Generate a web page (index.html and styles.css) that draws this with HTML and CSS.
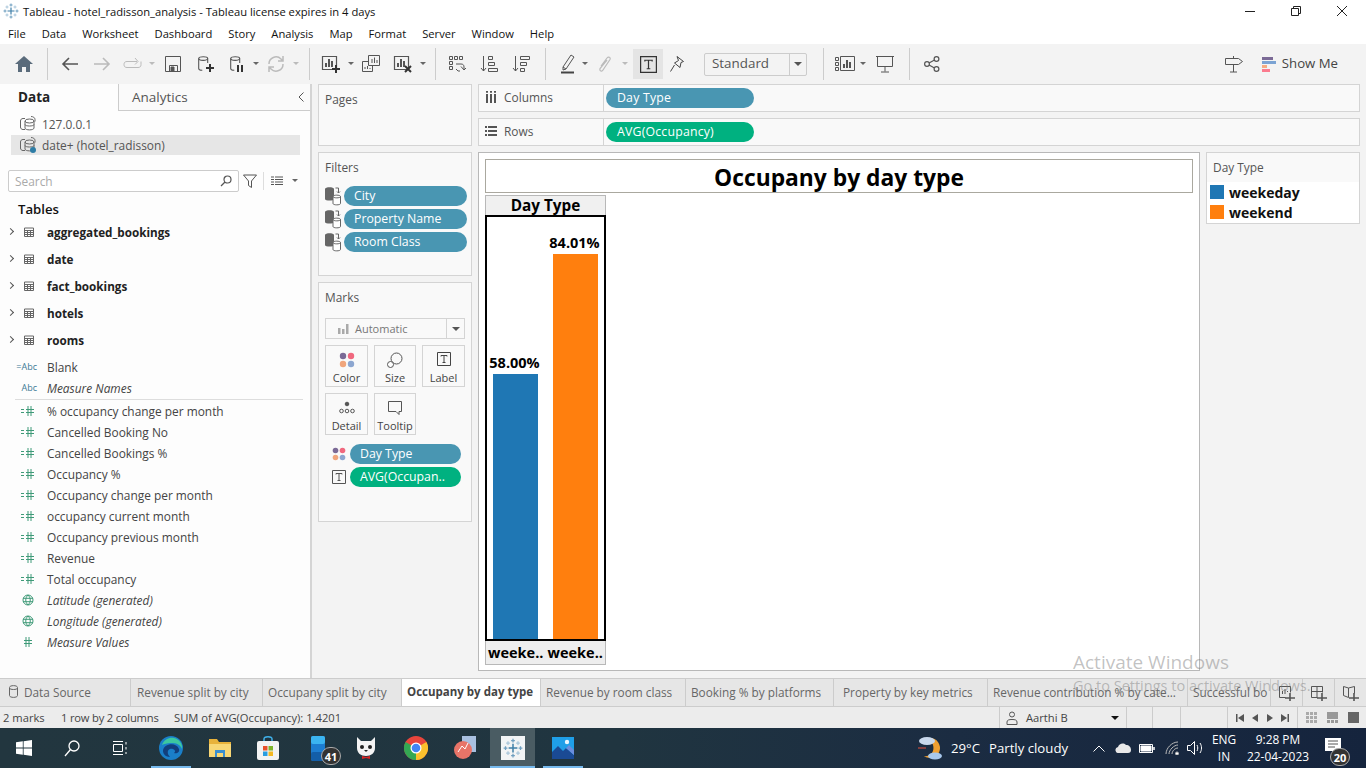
FILE: index.html
```html
<!DOCTYPE html>
<html lang="en">
<head>
  <meta charset="UTF-8" />
  <title>Tableau - hotel_radisson_analysis</title>
  <link rel="stylesheet" href="styles.css">
</head>
<body>
  <svg class="defs" width="0" height="0">
    <symbol id="logo" viewBox="0 0 16 16">
      <path d="M8 4.500v7M4.500 8h7" stroke="#3f7fa8" stroke-width="1.200"/>
      <path d="M8 .5v3M6.500 2h3M8 12.500v3M6.500 14h3M.5 8h3M2 6.500v3M12.500 8h3M14 6.500v3" stroke="#6f9fc0"/>
      <path d="M4 2.500v3M2.500 4h3M12 2.500v3M10.500 4h3M4 10.500v3M2.500 12h3M12 10.500v3M10.500 12h3" stroke="#a9c6da"/>
    </symbol>
    <symbol id="cyl" viewBox="0 0 20 20" fill="none" stroke="currentColor" stroke-width="1.2">
      <ellipse cx="8" cy="4" rx="5" ry="2"/>
      <path d="M3 4v11c0 1.2 2 2 4 2M13 4v5"/>
    </symbol>
    <symbol id="sheet" viewBox="0 0 20 20" fill="none" stroke="currentColor" stroke-width="1.2">
      <path d="M1.500 2.500h14v13h-14z"/>
      <path d="M5 13V9M8 13V5M11 13V7" stroke-width="2"/>
    </symbol>
    <symbol id="dots" viewBox="0 0 16 16">
      <circle cx="4" cy="4" r="3.200" fill="#7b6a96"/>
      <circle cx="12" cy="4" r="3.200" fill="#f0687e"/>
      <circle cx="4" cy="12" r="3.200" fill="#f0a57c"/>
      <circle cx="12" cy="12" r="3.200" fill="#8ca6d0"/>
    </symbol>
    <symbol id="tbox" viewBox="0 0 14 14" fill="none" stroke="currentColor">
      <path d="M.5.500h13v13H.5z"/>
      <path d="M4 4.500V3.500h6v1M7 3.500v7M5.500 10.500h3"/>
    </symbol>
    <symbol id="table" viewBox="0 0 12 12" fill="none" stroke="#666">
      <path d="M1.500 2h9v8.500h-9zM1.500 4.500h9M1.500 6.500h9M1.500 8.500h9M4.500 4.500v6M7.500 4.500v6"/>
    </symbol>
    <symbol id="calc" viewBox="0 0 16 12" fill="none" stroke="#3f9a78">
      <path d="M1 4.500h3M1 7.500h3M8 1v10M11 1v10M6 4.500h8M6 7.500h8"/>
    </symbol>
    <symbol id="globe" viewBox="0 0 12 12" fill="none" stroke="#3f9a78">
      <circle cx="6" cy="6" r="5"/>
      <path d="M1 4.300h10M1 7.700h10M6 1c-3 3-3 7 0 10M6 1c3 3 3 7 0 10"/>
    </symbol>
    <symbol id="ds-pair" viewBox="0 0 18 20">
      <path d="M1 3c0-2.500 9-2.500 9 0v10c0 2-9 2-9 0z" fill="#666"/>
      <path d="M9 10.500c0-1.800 7.500-1.800 7.500 0v7c0 1.800-7.500 1.800-7.500 0z" fill="#fff" stroke="#666"/>
      <path d="M9 10.500c0 1.800 7.500 1.800 7.500 0" fill="none" stroke="#666"/>
      <path d="M11.500 2h3v5M13 5.500l1.500 1.500 1.500-1.500" fill="none" stroke="#666"/>
    </symbol>
    <symbol id="ds-link" viewBox="0 0 16 16" fill="none" stroke="#666">
      <path d="M5 2.500H3C1.500 2.500.5 3.500.5 5v6c0 1.500 1 2.500 2.500 2.500h2M11 .5c2 0 4 1 4 3v2"/>
      <ellipse cx="9.500" cy="5" rx="4.500" ry="2"/>
      <path d="M5 5v7c0 2.500 9 2.500 9 0V5M5 8.500c0 2 9 2 9 0"/>
    </symbol>
  </svg>

  <header class="titlebar">
    <svg class="title-logo"><use href="#logo"/></svg>
    <span>Tableau - hotel_radisson_analysis - Tableau license expires in 4 days</span>
    <div class="win-controls">
      <div class="win-btn"><svg width="10" height="10"><path d="M0 5.500h10" stroke="#222"/></svg></div>
      <div class="win-btn"><svg width="10" height="10" fill="none" stroke="#222"><path d="M.5 2.500h7v7h-7zM2.500 2.500V.5h7v7h-2"/></svg></div>
      <div class="win-btn"><svg width="12" height="12" stroke="#222"><path d="M1 1l10 10M11 1L1 11"/></svg></div>
    </div>
  </header>

  <nav class="menubar">
    <span>File</span><span>Data</span><span>Worksheet</span><span>Dashboard</span><span>Story</span><span>Analysis</span><span>Map</span><span>Format</span><span>Server</span><span>Window</span><span>Help</span>
  </nav>

  <div class="toolbar">
    <div class="tool home"><svg width="18" height="16" viewBox="0 0 18 16"><path d="M9 0L0 8h3v8h4v-5h4v5h4V8h3z" fill="#5a6b7b"/></svg></div>
    <i class="sep"></i>
    <div class="tool"><svg width="18" height="16" fill="none" stroke="#555" stroke-width="1.600"><path d="M17 8H2M8 2L2 8l6 6"/></svg></div>
    <div class="tool off"><svg width="18" height="16" fill="none" stroke="#bbb" stroke-width="1.600"><path d="M1 8h15M10 2l6 6-6 6"/></svg></div>
    <div class="tool w30 off"><svg width="20" height="14" fill="none" stroke="#bbb"><path d="M1 7.500c0-2 1-3 3-3h10M1 7.500c0 2 1 3 3 3h11c2 0 3-1 3-3v-3M12 1l3 3.500-3 3"/></svg></div>
    <b class="caret off"></b>
    <div class="tool ml1"><svg width="16" height="16" fill="none" stroke="#555"><path d="M.5.500h15v15H.5zM4.500 15.500v-6h8v6"/><path d="M6 11h3v4H6z" fill="#555"/></svg></div>
    <div class="tool"><svg width="18" height="20" color="#555"><use href="#cyl"/><path d="M10 14h8M14 10v8" stroke="#333" stroke-width="2"/></svg></div>
    <div class="tool w31"><svg width="18" height="20" color="#555"><use href="#cyl"/><path d="M10 11v7M14 11v7" stroke="#333" stroke-width="2"/></svg></div>
    <b class="caret"></b>
    <div class="tool off"><svg width="18" height="18" fill="none" stroke="#bbb" stroke-width="1.500"><path d="M2 9a7 7 0 0 1 12-5l2 2M16 9a7 7 0 0 1-12 5l-2-2M16 1v5h-5M2 17v-5h5"/></svg></div>
    <b class="caret off"></b>
    <i class="sep ml9"></i>
    <div class="tool ml-s"><svg width="20" height="20" color="#555"><use href="#sheet"/><path d="M11 15h8M15 11v8" stroke="#333" stroke-width="2"/></svg></div>
    <b class="caret"></b>
    <div class="tool"><svg width="18" height="18" fill="none" stroke="#555"><path d="M6.500.5h11v10h-11zM.5 6.500h6M.5 6.500v10h10v-6M10 8V4M12.500 8V2.500M15 8V5M3 14v-2M5.500 14v-3M8 14v-1"/></svg></div>
    <div class="tool"><svg width="20" height="20" color="#555"><use href="#sheet"/><path d="M12 12l6 6M18 12l-6 6" stroke="#333" stroke-width="2"/></svg></div>
    <b class="caret"></b>
    <i class="sep ml8"></i>
    <div class="tool ml-s"><svg width="18" height="18" fill="none" stroke="#555"><path d="M1.500 1.500h3v3h-3zM6.500 1.500h3v3h-3zM11.500 1.500h3v3h-3zM1.500 6.500h3v3h-3zM1.500 11.500h3v3h-3zM8 9h5c2 0 3 1 3 3v2M13 11.500L16 15l2-2M12 16h-2l-2-2"/></svg></div>
    <div class="tool"><svg width="18" height="18" fill="none" stroke="#555"><path d="M3.500 1v15M1 13l2.500 3L6 13"/><path d="M8.500 1.500h4v3h-4zM8.500 7.500h6v3h-6zM8.500 13.500h9v3h-9z"/></svg></div>
    <div class="tool"><svg width="18" height="18" fill="none" stroke="#555"><path d="M3.500 1v15M1 13l2.500 3L6 13"/><path d="M8.500 1.500h9v3h-9zM8.500 7.500h6v3h-6zM8.500 13.500h4v3h-4z"/></svg></div>
    <i class="sep ml8"></i>
    <div class="tool w26 ml9"><svg width="16" height="20" fill="none" stroke="#555"><path d="M3 13L11 1l3 2-8 12-3 1zM3 13l3 2"/><path d="M1 18.500h13" stroke="#444" stroke-width="2"/></svg></div>
    <b class="caret"></b>
    <div class="tool off"><svg width="14" height="18" fill="none" stroke="#bbb" stroke-width="1.200"><path d="M3 11l6-8c1.500-2 4-.5 3 1.500L5 15c-1 2-4 1-3-1.500L9 5"/></svg></div>
    <b class="caret off"></b>
    <div class="tool w30 pressed ml4"><svg width="17" height="17" color="#333"><use href="#tbox"/></svg></div>
    <div class="tool w28"><svg width="16" height="18" fill="none" stroke="#444"><path d="M8 1.500l6.500 5-2.500 1-1 5-5.500-4.500 4-2.500zM5.500 10l-4 6.500"/></svg></div>
    <div class="fit-select">
      <span>Standard</span><div class="fit-arrow"><b class="caret dark"></b></div>
    </div>
    <i class="sep ml16"></i>
    <div class="tool w28 ml7"><svg width="20" height="16" fill="none" stroke="#555"><path d="M.5 1.500h3v3h-3zM.5 6.500h3v3h-3zM.5 11.500h3v3h-3zM5.500.5h14v14h-14z"/><path d="M9 12V8M12 12V4M15 12V6" stroke-width="2"/></svg></div>
    <b class="caret"></b>
    <div class="tool ml2"><svg width="18" height="18" fill="none" stroke="#555"><path d="M0 1.500h18M1.500 1.500v10h15v-10M9 11.500v5M5 17h8"/></svg></div>
    <i class="sep ml8"></i>
    <div class="tool ml-s1"><svg width="16" height="16" fill="none" stroke="#555" stroke-width="1.200"><circle cx="3" cy="8" r="2.400"/><circle cx="12.500" cy="3" r="2.400"/><circle cx="12.500" cy="13" r="2.400"/><path d="M5 7l5.500-3M5 9l5.500 3"/></svg></div>
    <div class="toolbar-right">
      <div class="tool"><svg width="18" height="18" fill="none" stroke="#555"><path d="M.5 3.500h13l4 3-4 3H.5zM8.500 1v2.500M8.500 9.500V17M5 17h7"/></svg></div>
      <div class="show-me">
        <div class="bars"><i class="b1"></i><i class="b2"></i><i class="b3"></i><i class="b4"></i></div>
        <span>Show Me</span>
      </div>
    </div>
  </div>

  <main class="workspace">
    <aside class="data-pane">
      <div class="pane-tabs">
        <div class="pane-tab active">Data</div>
        <div class="pane-tab">Analytics<svg class="collapse" width="6" height="10" fill="none" stroke="#555"><path d="M5.500.5L1 5l4.500 4.500"/></svg></div>
      </div>
      <div class="ds-list">
        <div class="ds-row"><svg width="16" height="16"><use href="#ds-link"/></svg>127.0.0.1</div>
        <div class="ds-row selected"><svg width="16" height="16"><use href="#ds-link"/><circle cx="13" cy="13" r="3" fill="#2e7da6"/></svg>date+ (hotel_radisson)</div>
      </div>
      <div class="search-row">
        <div class="search"><span>Search</span><svg width="12" height="12" fill="none" stroke="#555" stroke-width="1.200"><circle cx="7.500" cy="4.500" r="3.500"/><path d="M5 7l-4 4"/></svg></div>
        <svg class="funnel" width="14" height="14" fill="none" stroke="#555"><path d="M.5 1h13L8.500 7v6.500l-3-2V7z"/></svg>
        <i class="mini-sep"></i>
        <svg class="list-view" width="12" height="10" stroke="#555"><path d="M0 1h3M4 1h8M0 3.500h3M4 3.500h8M0 6h3M4 6h8M0 8.500h3M4 8.500h8"/></svg>
        <b class="caret"></b>
      </div>
      <div class="tables-head">Tables</div>
      <div class="table-row"><span class="chev"></span><svg width="12" height="12"><use href="#table"/></svg><span>aggregated_bookings</span></div>
      <div class="table-row"><span class="chev"></span><svg width="12" height="12"><use href="#table"/></svg><span>date</span></div>
      <div class="table-row"><span class="chev"></span><svg width="12" height="12"><use href="#table"/></svg><span>fact_bookings</span></div>
      <div class="table-row"><span class="chev"></span><svg width="12" height="12"><use href="#table"/></svg><span>hotels</span></div>
      <div class="table-row"><span class="chev"></span><svg width="12" height="12"><use href="#table"/></svg><span>rooms</span></div>
      <div class="fields dims">
        <div class="field"><span class="ficon abc">=Abc</span><span>Blank</span></div>
        <div class="field"><span class="ficon abc">Abc</span><em>Measure Names</em></div>
      </div>
      <div class="fields measures">
        <div class="field"><span class="ficon"><svg width="16" height="12"><use href="#calc"/></svg></span><span>% occupancy change per month</span></div>
        <div class="field"><span class="ficon"><svg width="16" height="12"><use href="#calc"/></svg></span><span>Cancelled Booking No</span></div>
        <div class="field"><span class="ficon"><svg width="16" height="12"><use href="#calc"/></svg></span><span>Cancelled Bookings %</span></div>
        <div class="field"><span class="ficon"><svg width="16" height="12"><use href="#calc"/></svg></span><span>Occupancy %</span></div>
        <div class="field"><span class="ficon"><svg width="16" height="12"><use href="#calc"/></svg></span><span>Occupancy change per month</span></div>
        <div class="field"><span class="ficon"><svg width="16" height="12"><use href="#calc"/></svg></span><span>occupancy current month</span></div>
        <div class="field"><span class="ficon"><svg width="16" height="12"><use href="#calc"/></svg></span><span>Occupancy previous month</span></div>
        <div class="field"><span class="ficon"><svg width="16" height="12"><use href="#calc"/></svg></span><span>Revenue</span></div>
        <div class="field"><span class="ficon"><svg width="16" height="12"><use href="#calc"/></svg></span><span>Total occupancy</span></div>
        <div class="field"><span class="ficon"><svg class="globe-ic" width="12" height="12"><use href="#globe"/></svg></span><em>Latitude (generated)</em></div>
        <div class="field"><span class="ficon"><svg class="globe-ic" width="12" height="12"><use href="#globe"/></svg></span><em>Longitude (generated)</em></div>
        <div class="field"><span class="ficon"><svg width="16" height="12" viewBox="0 0 16 12" fill="none" stroke="#3f9a78"><path d="M6 1v10M9 1v10M4 4.500h8M4 7.500h8"/></svg></span><em>Measure Values</em></div>
      </div>
    </aside>

    <section class="cards">
      <div class="card pages"><div class="card-title">Pages</div></div>
      <div class="card filters">
        <div class="card-title">Filters</div>
        <div class="filter-row"><svg width="18" height="20"><use href="#ds-pair"/></svg><div class="pill dim">City</div></div>
        <div class="filter-row"><svg width="18" height="20"><use href="#ds-pair"/></svg><div class="pill dim">Property Name</div></div>
        <div class="filter-row"><svg width="18" height="20"><use href="#ds-pair"/></svg><div class="pill dim">Room Class</div></div>
      </div>
      <div class="card marks">
        <div class="card-title">Marks</div>
        <div class="mark-type">
          <div class="mark-type-name"><svg width="11" height="10" fill="#aaa"><path d="M0 4h2.500v6H0zM4 5h2.500v5H4zM8 0h2.500v10H8z"/></svg>Automatic</div>
          <div class="mark-type-arrow"><b class="caret dark"></b></div>
        </div>
        <div class="mark-grid">
          <div class="mark-btn"><svg width="16" height="16"><use href="#dots"/></svg>Color</div>
          <div class="mark-btn"><svg width="16" height="16" fill="none" stroke="#555"><circle cx="9.500" cy="6.500" r="5.500"/><circle cx="3.500" cy="12.500" r="3" fill="#fff"/></svg>Size</div>
          <div class="mark-btn"><svg width="14" height="14" color="#444"><use href="#tbox"/></svg>Label</div>
          <div class="mark-btn"><svg width="16" height="16" fill="none" stroke="#555"><circle cx="8" cy="4" r="1.800" fill="#555"/><circle cx="2.500" cy="11" r="1.800"/><circle cx="8" cy="11" r="1.800"/><circle cx="13.500" cy="11" r="1.800"/></svg>Detail</div>
          <div class="mark-btn"><svg width="16" height="16" fill="none" stroke="#555"><path d="M1.500 1.500h13v10h-2.500v3l-3-3h-7.500z"/></svg>Tooltip</div>
        </div>
        <div class="mark-pill"><svg width="16" height="16"><use href="#dots"/></svg><div class="pill dim">Day Type</div></div>
        <div class="mark-pill"><svg width="14" height="14" color="#555"><use href="#tbox"/></svg><div class="pill meas">AVG(Occupan..</div></div>
      </div>
    </section>

    <section class="canvas">
      <div class="shelf">
        <div class="shelf-label"><svg width="12" height="12" stroke="#555" stroke-width="2"><path d="M2 3v9M6 3v9M10 3v9M1 .8h2M5 .8h2M9 .8h2"/></svg>Columns</div>
        <div class="pill dim wide">Day Type</div>
      </div>
      <div class="shelf">
        <div class="shelf-label"><svg width="12" height="12" stroke="#555" stroke-width="2"><path d="M3 2h9M3 6h9M3 10h9M0 2h2M0 6h2M0 10h2"/></svg>Rows</div>
        <div class="pill meas wide">AVG(Occupancy)</div>
      </div>
      <div class="view-row">
        <div class="view">
          <div class="view-title">Occupany by day type</div>
          <div class="chart">
            <div class="axis-head">Day Type</div>
            <div class="plot">
              <div class="bar-col"><span>58.00%</span><div class="bar bar-low"></div></div>
              <div class="bar-col"><span>84.01%</span><div class="bar bar-high"></div></div>
            </div>
            <div class="axis-foot"><span>weeke..</span><span>weeke..</span></div>
          </div>
        </div>
        <div class="legend">
          <div class="legend-title">Day Type</div>
          <div class="legend-item"><i class="swatch blue"></i>weekeday</div>
          <div class="legend-item"><i class="swatch orange"></i>weekend</div>
        </div>
      </div>
    </section>
  </main>

  <div class="tabs">
    <div class="tab t-ds"><svg width="9" height="13" fill="none" stroke="#666"><path d="M.5 2.500c0-2.500 8-2.500 8 0v8c0 2.500-8 2.500-8 0zM.5 3c0 2 8 2 8 0"/></svg>Data Source</div>
    <div class="tab t1">Revenue split by city</div>
    <div class="tab t2">Occupany split by city</div>
    <div class="tab t3 active">Occupany by day type</div>
    <div class="tab t4">Revenue by room class</div>
    <div class="tab t5">Booking % by platforms</div>
    <div class="tab t6">Property by key metrics</div>
    <div class="tab t7">Revenue contribution % by cate...</div>
    <div class="tab t8">Successful bo</div>
    <div class="tab-add"><svg width="16" height="16" fill="none" stroke="#555"><path d="M.5 1.500h11v6M.5 1.500v11h6M3.500 9V6M6 9V4M8.500 7V6"/><path d="M6 13h10M11 8v8" stroke-width="1.600"/></svg></div>
    <div class="tab-add"><svg width="16" height="16" fill="none" stroke="#555"><path d="M.5 1.500h11v6M.5 1.500v11h6M.5 6.500h11M6 1.500v11"/><path d="M6 13h10M11 8v8" stroke-width="1.600"/></svg></div>
    <div class="tab-add"><svg width="16" height="16" fill="none" stroke="#555"><path d="M.5 1.500l5 1.500 6-1.500v7M.5 1.500v9l5 2M5.500 3v9.500"/><path d="M6 13h10M11 8v8" stroke-width="1.600"/></svg></div>
  </div>

  <footer class="statusbar">
    <span class="s1">2 marks</span>
    <span class="s2">1 row by 2 columns</span>
    <span class="s3">SUM of AVG(Occupancy): 1.4201</span>
    <div class="user-box"><svg width="12" height="14" fill="none" stroke="#555"><circle cx="6" cy="3.500" r="2.500"/><path d="M1 13.500v-2.500c0-2 2-2.500 5-2.500s5 .5 5 2.500v2.500z"/></svg><span>Aarthi B</span><b class="caret black"></b></div>
    <div class="s-cell c1"></div>
    <div class="s-cell c2"></div>
    <div class="s-cell c3"></div>
    <div class="sheet-nav">
      <svg width="8" height="8" fill="#555"><path d="M0 0h1.500v8H0zM8 0v8L2 4z"/></svg>
      <svg width="8" height="8" fill="#555"><path d="M7 0v8L1 4z"/></svg>
      <svg width="8" height="8" fill="#555"><path d="M1 0v8l6-4z"/></svg>
      <svg width="8" height="8" fill="#555"><path d="M0 0v8l6-4zM6.500 0H8v8H6.500z"/></svg>
    </div>
    <div class="view-modes">
      <svg width="11" height="11" stroke="#aaa" stroke-width="3" stroke-dasharray="3 1"><path d="M0 1.500h11M0 5.500h11M0 9.500h11"/></svg>
      <svg width="11" height="11" fill="#999"><path d="M0 0h11v7H0zM0 8h3v3H0zM4 8h3v3H4zM8 8h3v3H8z"/></svg>
      <svg width="11" height="11" fill="#666"><path d="M0 0h11v11H0z"/></svg>
    </div>
  </footer>

  <div class="taskbar">
    <div class="task-left">
      <div class="tk w-start"><svg width="16" height="16" fill="#fff"><path d="M0 2.300L6.800 1.300v6.300H0zM7.600 1.200L16 0v7.600H7.600zM0 8.400h6.800v6.300L0 13.700zM7.600 8.400H16V16l-8.400-1.200z"/></svg></div>
      <div class="tk w-search"><svg width="16" height="17" fill="none" stroke="#fff" stroke-width="1.300"><circle cx="10" cy="6" r="5"/><path d="M6.500 9.500L1 16"/></svg></div>
      <div class="tk w-view"><svg width="16" height="14" fill="none" stroke="#fff"><path d="M1.500 3.500h9v7h-9zM1 .5h10M1 13.500h10M14 1v2.500M14 6v2.500M14 11v2"/></svg></div>
      <div class="tk w-edge running"><svg width="24" height="24" viewBox="0 0 24 24"><circle cx="12" cy="12" r="12" fill="#1a7fc9"/><path d="M4 15c0-7 13-10 16-2 1 3-2 5-5 4 3-2-1-5-4-4-3 1-3 5 0 8-4 0-7-3-7-6z" fill="#123f7c"/><path d="M3 9C5 3 11 1 15 2c5 1 9 6 8 11-2-5-6-6-11-6-4 0-7 1-9 2z" fill="#3cc8a0"/></svg></div>
      <div class="tk w-files"><svg width="22" height="18" viewBox="0 0 22 18"><path d="M0 0h8l2 3h12v15H0z" fill="#e8b23a"/><path d="M0 5h22v13H0z" fill="#f8d775"/><path d="M6 11h10v7h-2v-4H8v4H6z" fill="#3a8fd0"/></svg></div>
      <div class="tk w-store"><svg width="22" height="24" viewBox="0 0 22 24"><path d="M7 6V3c0-3 8-3 8 0v3" fill="none" stroke="#3fb0e8" stroke-width="1.500"/><rect y="5" width="22" height="19" rx="2" fill="#f3f3f3"/><path d="M6 10h4.500v4.500H6z" fill="#e8502a"/><path d="M11.500 10H16v4.500h-4.500z" fill="#7db52a"/><path d="M6 15.500h4.500V20H6z" fill="#2a9de0"/><path d="M11.500 15.500H16V20h-4.500z" fill="#f5b922"/></svg></div>
      <div class="tk w-phone"><svg class="phone" width="14" height="25" viewBox="0 0 14 25"><rect width="14" height="25" rx="2" fill="#1d7dd0"/><rect width="14" height="8" rx="2" fill="#3bb4f0"/><rect y="16" width="14" height="9" rx="2" fill="#135ea8"/></svg><span class="task-badge b41">41</span></div>
      <div class="tk w-cat"><svg width="20" height="24" viewBox="0 0 20 24"><path d="M1 1l4 4h10l4-4 0 11c0 5-4 8-9 8s-9-3-9-8z" fill="#f4f4f4"/><circle cx="6" cy="11" r="2" fill="#222"/><circle cx="14" cy="11" r="2" fill="#222"/><path d="M8 14h4l-2 2z" fill="#222"/><path d="M6 20l4 1 4-1v3l-4-1-4 1z" fill="#d22"/></svg></div>
      <div class="tk w-chrome"><svg width="24" height="24" viewBox="0 0 24 24"><circle cx="12" cy="12" r="12" fill="#e8453c"/><path d="M12 12L22.400 6A12 12 0 0 1 12 24z" fill="#fbc02d"/><path d="M12 12L12 24A12 12 0 0 1 1.600 6z" fill="#34a853"/><circle cx="12" cy="12" r="5.500" fill="#fff"/><circle cx="12" cy="12" r="4.300" fill="#4285f4"/></svg></div>
      <div class="tk w-red"><svg width="22" height="24" viewBox="0 0 22 24"><path d="M8 0h14v16H8z" fill="#a8c0e0"/><circle cx="9" cy="14" r="9" fill="#e87468"/><path d="M4 16l4-6 3 3 3-6" fill="none" stroke="#fff"/></svg></div>
      <div class="tk w-tableau running open"><div class="tab-tile"><svg width="20" height="20"><use href="#logo"/></svg></div></div>
      <div class="tk w-photos running"><svg width="22" height="22" viewBox="0 0 22 22"><path d="M0 0h22v22H0z" fill="#1f9fe8"/><circle cx="15" cy="5" r="2.200" fill="#e8f6ff"/><path d="M0 15l6-6 5 5 3-3 8 7v4H0z" fill="#1a4a94"/><path d="M11 14l3-3 8 7v-5l-5-5z" fill="#6a8cdc"/></svg></div>
    </div>
    <div class="task-right">
      <svg class="weather" width="24" height="24" viewBox="0 0 24 24"><path d="M12 2a10 10 0 1 1-6 18c6 1 11-4 9-11-1-3-2-5-3-7z" fill="#f0a030"/><ellipse cx="9" cy="5" rx="8" ry="4" fill="#c8d8ec"/><ellipse cx="17" cy="20" rx="7" ry="3.500" fill="#a8c8ec"/><path d="M0 12h8" stroke="#e8503a"/></svg>
      <span class="temp">29°C</span>
      <span class="cond">Partly cloudy</span>
      <svg class="tray-chev" width="12" height="7" fill="none" stroke="#fff"><path d="M.5 6.500L6 1l5.500 5.500"/></svg>
      <svg class="tray-cloud" width="16" height="10" fill="#e8e8e8"><path d="M4 10a3 3 0 0 1-1-6c1-3 5-5 8-2 3 0 5 2 5 5 0 2-1 3-3 3z"/></svg>
      <svg class="tray-batt" width="16" height="9" fill="none" stroke="#fff"><path d="M.5.500h13v8H.5z"/><path d="M2 2h10v5H2z" fill="#fff"/><path d="M15 3v3" stroke-width="1.500"/></svg>
      <svg class="tray-wifi" width="14" height="14" fill="none" stroke="#bbb"><path d="M1 13C1 7 7 1 13 1M4 13c0-4 5-9 9-9M7 13c0-3 3-6 6-6"/><circle cx="12" cy="12.500" r="1.500" fill="#fff"/></svg>
      <svg class="tray-vol" width="17" height="14" fill="none" stroke="#fff"><path d="M.5 4.500h3l4-4v13l-4-4h-3zM10 4c1 2 1 4 0 6M13 2c2 3 2 7 0 10"/></svg>
      <div class="lang"><span>ENG</span><span>IN</span></div>
      <div class="clock"><span>9:28 PM</span><span>22-04-2023</span></div>
      <div class="notify"><svg class="notify-ic" width="16" height="13" fill="#fff"><path d="M0 0h16v13H0z"/><path d="M3 3h10M3 6h10M3 9h7" stroke="#555"/></svg><span class="task-badge b20">20</span></div>
    </div>
  </div>

  <div class="watermark">
    <div class="wm-big">Activate Windows</div>
    <div class="wm-small">Go to Settings to activate Windows.</div>
  </div>
</body>
</html>
```

FILE: styles.css
```css
/* ── RESET & BASE ───────────────────────────────────────── */
* { margin: 0; padding: 0; box-sizing: border-box; }
html, body { width: 1366px; height: 768px; overflow: hidden; }
body {
  position: relative;
  font-family: "Open Sans", "Noto Sans", sans-serif;
  font-size: 11.9px;
  color: #333;
  background: #f3f3f3;
  display: flex;
  flex-direction: column;
}
svg { display: block; flex: none; }
.defs { position: absolute; }

/* ── TITLE + MENU ───────────────────────────────────────── */
.titlebar {
  height: 22px;
  background: #fff;
  color: #111;
  display: flex;
  align-items: center;
  padding-left: 3px;
  font-size: 11.2px;
}
.title-logo { width: 16px; height: 16px; margin-right: 4px; }
.win-controls { margin-left: auto; margin-right: 1px; display: flex; }
.win-btn { width: 46px; height: 22px; display: flex; align-items: center; justify-content: center; }
.menubar {
  height: 22px;
  background: #fff;
  color: #111;
  display: flex;
  align-items: center;
  padding-left: 8px;
  gap: 16px;
  font-size: 11.2px;
}

/* ── TOOLBAR ───────────────────────────────────────────── */
.toolbar {
  height: 40px;
  background: #f3f3f3;
  display: flex;
  align-items: center;
  padding-left: 8px;
}
.tool { width: 32px; height: 30px; flex: none; display: flex; align-items: center; justify-content: center; }
.tool.w30 { width: 30px; }
.tool.w31 { width: 31px; }
.tool.w28 { width: 28px; }
.tool.w26 { width: 26px; }
.tool.pressed { background: #e4e4e4; }
.sep { width: 1px; height: 32px; background: #ccc; margin-left: 7px; margin-right: 6px; flex: none; }
.sep.ml9 { margin-left: 9px; margin-right: 0; }
.sep.ml8 { margin-left: 8px; margin-right: 0; }
.sep.ml16 { margin-left: 16px; margin-right: 0; }
.ml1 { margin-left: 1px; }
.ml2 { margin-left: 2px; }
.ml4 { margin-left: 4px; }
.ml7 { margin-left: 7px; }
.ml9 { margin-left: 9px; }
.ml-s { margin-left: 5px; }
.ml-s1 { margin-left: 6px; }
.caret {
  display: block;
  width: 8px;
  height: 4px;
  flex: none;
  position: relative;
}
.caret::after {
  content: "";
  position: absolute;
  left: 1px;
  top: 0;
  border-left: 3px solid transparent;
  border-right: 3px solid transparent;
  border-top: 3px solid #666;
}
.caret.off::after { border-top-color: #bbb; }
.caret.dark::after { border-left-width: 4px; border-right-width: 4px; border-top-width: 4px; left: 0; border-top-color: #555; }
.caret.black::after { border-left-width: 4px; border-right-width: 4px; border-top-width: 4px; left: 0; border-top-color: #111; }
.fit-select {
  width: 103px;
  height: 23px;
  margin-left: 13px;
  border: 1px solid #ccc;
  border-radius: 2px;
  display: flex;
  align-items: center;
  font-size: 13.4px;
  color: #555;
  flex: none;
}
.fit-select span { padding: 0 0 2px 7px; width: 84px; }
.fit-arrow { flex: 1; height: 100%; border-left: 1px solid #ccc; display: flex; align-items: center; justify-content: center; }
.toolbar-right { margin-left: auto; display: flex; align-items: center; padding-right: 28px; }
.show-me { display: flex; align-items: center; gap: 6px; font-size: 13.2px; color: #444; margin-left: 12px; }
.show-me span { padding-bottom: 2px; }
.bars { width: 14px; display: flex; flex-direction: column; gap: 1px; }
.bars i { display: block; height: 3px; }
.b1 { width: 11px; background: #7b6a96; }
.b2 { width: 14px; background: #7ba3d3; }
.b3 { width: 5px; background: #f5ab82; }
.b4 { width: 8px; background: #fb7b8e; }

/* ── WORKSPACE ─────────────────────────────────────────── */
.workspace { height: 594px; display: flex; }
.data-pane { width: 312px; flex: none; background: #fdfdfd; border-right: 2px solid #d4d4d4; }
.pane-tabs { display: flex; height: 27px; background: #f3f3f3; }
.pane-tab { font-size: 13.500px; display: flex; align-items: center; color: #555; position: relative; padding-bottom: 1px; }
.pane-tab.active { width: 119px; padding-left: 18px; font-weight: 700; color: #222; background: #fdfdfd; border-right: 1px solid #ccc; }
.pane-tab:not(.active) { flex: 1; padding-left: 13px; background: #fafafa; border-bottom: 1px solid #ccc; }
.collapse { position: absolute; right: 6px; top: 8px; }
.ds-list { padding: 3px 10px 0 11px; height: 50px; }
.ds-row { height: 21px; display: flex; align-items: center; gap: 6px; padding: 0 0 2px 9px; color: #555; }
.ds-row.selected { background: #e6e6e6; height: 20px; padding-bottom: 0; }
.search-row { height: 27px; padding-left: 8px; display: flex; align-items: center; margin-top: 6px; }
.search {
  width: 231px;
  height: 22px;
  border: 1px solid #ccc;
  border-radius: 2px;
  background: #fff;
  color: #aaa;
  display: flex;
  align-items: center;
  justify-content: space-between;
  padding: 0 6px;
}
.funnel { margin-left: 4px; }
.mini-sep { width: 1px; height: 18px; background: #ddd; margin-left: 6px; }
.list-view { margin-left: 7px; margin-right: 8px; }
.tables-head { height: 19px; margin-top: 5px; padding-left: 18px; font-size: 13.200px; font-weight: 600; color: #111; display: flex; align-items: center; }
.table-row { height: 27px; display: flex; align-items: center; font-size: 11.700px; font-weight: 700; color: #222; }
.table-row svg { margin-right: 12px; }
.chev { width: 5px; height: 5px; margin: 0 10px 0 8px; border-top: 1px solid #555; border-right: 1px solid #555; transform: rotate(45deg); flex: none; }
.fields { padding-left: 15px; }
.dims { padding-top: 3px; height: 47px; }
.dims::after { content: ""; display: block; height: 1px; background: #ddd; margin-right: 7px; margin-top: 1px; }
.field { height: 21px; display: flex; align-items: center; color: #444; }
.ficon { width: 32px; display: flex; justify-content: flex-end; padding-right: 11px; flex: none; }
.ficon .globe-ic { margin-right: 2px; }
.ficon.abc { font-size: 9px; color: #3d7a96; padding-right: 10px; }
.field em { font-style: italic; }

/* ── CARDS ─────────────────────────────────────────────── */
.cards { width: 154px; margin-left: 6px; flex: none; display: flex; flex-direction: column; gap: 6px; }
.card { background: #f9f9f9; border: 1px solid #d4d4d4; }
.card-title { padding: 6px 6px 0; color: #555; }
.pages { height: 62px; }
.filters { height: 124px; }
.marks { height: 240px; }
.filter-row { display: flex; align-items: center; height: 23px; padding-left: 5px; }
.filters .card-title { height: 31px; }
.filter-row .pill { width: 123px; margin-left: 2px; }
.pill {
  height: 20px;
  border-radius: 10px;
  color: #fff;
  padding: 0 0 1px 10px;
  font-size: 12.300px;
  display: flex;
  align-items: center;
  flex: none;
  white-space: nowrap;
  overflow: hidden;
}
.pill.dim { background: #4996b2; }
.pill.meas { background: #00b180; }
.pill.wide { width: 148px; padding-left: 11px; letter-spacing: .2px; }
.marks .card-title { height: 35px; }
.mark-type { height: 21px; margin: 0 6px; border: 1px solid #d4d4d4; background: #f9f9f9; display: flex; align-items: center; font-size: 11px; color: #777; }
.mark-type-name { flex: 1; display: flex; align-items: center; gap: 6px; padding-left: 12px; }
.mark-type-arrow { width: 18px; height: 100%; border-left: 1px solid #d4d4d4; display: flex; align-items: center; justify-content: center; }
.mark-grid { display: grid; grid-template-columns: 43px 42px 43px; gap: 6px; margin: 6px 6px 0; }
.mark-btn {
  height: 42px;
  border: 1px solid #d4d4d4;
  font-size: 11px;
  display: flex;
  flex-direction: column;
  align-items: center;
  justify-content: space-between;
  padding: 6px 0 1px;
  color: #444;
}
.mark-pill { display: flex; align-items: center; margin-top: 3px; padding-left: 13px; }
.mark-grid + .mark-pill { margin-top: 9px; }
.mark-pill svg { width: 14px; }
.mark-pill .pill { width: 111px; margin-left: 4px; }

/* ── SHELVES + VIEW ────────────────────────────────────── */
.canvas { width: 882px; margin-left: 6px; flex: none; }
.shelf { height: 28px; margin-bottom: 6px; background: #f9f9f9; border: 1px solid #d4d4d4; display: flex; align-items: center; }
.shelf-label { width: 125px; height: 100%; border-right: 1px solid #d4d4d4; display: flex; align-items: center; gap: 7px; padding: 0 0 3px 6px; color: #555; flex: none; }
.shelf .pill { margin-left: 2px; }
.view-row { display: flex; gap: 6px; }
.view { width: 722px; height: 519px; background: #fff; border: 1px solid #b8b8b8; padding: 6px; }
.view-title {
  height: 34px;
  border: 1px solid #aaa89f;
  padding-top: 2px;
  font-size: 22.800px;
  font-weight: 700;
  color: #000;
  display: flex;
  align-items: center;
  justify-content: center;
}
.chart { width: 121px; margin-top: 2px; font-weight: 700; color: #000; }
.axis-head { height: 20px; font-size: 15.300px; padding-bottom: 2px; background: #f0f0f0; border: 1px solid #b8b8b8; border-bottom: 0; display: flex; align-items: center; justify-content: center; }
.plot { height: 426px; border: 2px solid #000; display: flex; align-items: flex-end; padding-left: 6px; gap: 15px; }
.bar-col { width: 45px; display: flex; flex-direction: column; align-items: center; font-size: 14.500px; }
.bar-col span { white-space: nowrap; margin: 0 0 2px -2px; }
.bar { width: 45px; }
.bar-low { height: 265px; background: #1f77b4; }
.bar-high { height: 385px; background: #ff7f0e; }
.axis-foot { height: 24px; background: #eee; border: 1px solid #b8b8b8; border-top: 0; display: flex; align-items: center; justify-content: space-around; font-size: 14.500px; }
.legend { width: 154px; height: 72px; background: #fff; border: 1px solid #d4d4d4; }
.legend-title { height: 29px; background: #f9f9f9; padding: 6px 6px 0; color: #555; }
.legend-item { height: 20px; display: flex; align-items: center; gap: 5px; padding-left: 3px; font-size: 14px; font-weight: 700; color: #111; }
.swatch { width: 14px; height: 14px; }
.swatch.blue { background: #1f77b4; }
.swatch.orange { background: #ff7f0e; }

/* ── TABS + STATUS ─────────────────────────────────────── */
.tabs { height: 29px; background: #e6e6e6; border-top: 1px solid #ccc; border-bottom: 1px solid #ccc; display: flex; color: #666; font-size: 11.800px; }
.tab { flex: none; display: flex; align-items: center; padding: 0 0 2px 5px; border-right: 1px solid #ccc; white-space: nowrap; overflow: hidden; }
.t-ds { width: 131px; gap: 6px; padding-left: 9px; }
.t1 { width: 132px; padding-left: 6px; }
.t2 { width: 139px; }
.t3 { width: 139px; }
.t3.active { background: #fff; font-weight: 700; font-size: 11.500px; color: #444; padding-bottom: 3px; }
.t4 { width: 145px; }
.t5 { width: 148px; }
.t6 { width: 154px; padding-left: 9px; }
.t7 { width: 200px; }
.t8 { width: 82px; border-right: 0; }
.tab-add { width: 32px; flex: none; border-left: 1px solid #ccc; display: flex; align-items: center; justify-content: center; }
.statusbar { height: 21px; background: #ececec; display: flex; align-items: center; color: #444; font-size: 11.200px; }
.s1 { width: 61px; padding-left: 3px; }
.s2 { width: 113px; letter-spacing: -.2px; }
.s3 { width: 825px; }
.user-box { width: 128px; height: 100%; display: flex; align-items: center; border-left: 1px solid #ccc; border-right: 1px solid #ccc; padding-left: 6px; gap: 8px; }
.user-box span { width: 77px; }
.s-cell { height: 100%; border-right: 1px solid #ccc; flex: none; }
.c1 { width: 26px; }
.c2 { width: 28px; }
.c3 { width: 47px; }
.sheet-nav { width: 70px; height: 100%; border-right: 1px solid #ccc; display: flex; align-items: center; justify-content: space-around; padding: 0 4px; flex: none; }
.view-modes { flex: 1; display: flex; align-items: center; justify-content: space-around; padding: 0 2px 0 3px; }

/* ── TASKBAR ───────────────────────────────────────────── */
.taskbar {
  height: 40px;
  background: linear-gradient(90deg, #22363f 0%, #203540 45%, #1b2c42 70%, #15243d 100%);
  color: #fff;
  display: flex;
  justify-content: space-between;
}
.task-left { display: flex; }
.tk { height: 40px; display: flex; align-items: center; justify-content: center; flex: none; position: relative; }
.w-start { width: 47px; }
.w-search { width: 49px; }
.w-view { width: 47px; }
.w-edge { width: 40px; margin-left: 8px; }
.w-files { width: 48px; margin-left: 5px; }
.w-store { width: 48px; }
.w-phone { width: 52px; }
.w-cat { width: 44px; }
.w-chrome { width: 56px; }
.w-red { width: 42px; }
.w-tableau { width: 45px; margin-left: 4px; }
.w-photos { width: 40px; margin-left: 8px; }
.running::after { content: ""; position: absolute; left: 0; right: 0; bottom: 0; height: 2px; background: #76b9ed; }
.open { background: #4a5c63; }
.tab-tile { width: 24px; height: 24px; background: #f2f4f5; display: flex; align-items: center; justify-content: center; }
.task-badge {
  position: absolute;
  height: 18px;
  min-width: 20px;
  border-radius: 9px;
  background: #333;
  border: 1px solid #aaa;
  font-size: 11px;
  font-weight: 700;
  color: #fff;
  display: flex;
  align-items: center;
  justify-content: center;
}
.b41 { left: 29px; top: 19px; }
.b20 { left: 15px; top: 20px; }
.task-right { display: flex; align-items: center; }
.weather { margin-right: 9px; }
.temp { font-size: 13.200px; width: 38px; }
.cond { font-size: 13.200px; width: 104px; }
.tray-chev { margin-right: 10px; }
.tray-cloud { margin-right: 8px; }
.tray-batt { margin-right: 10px; }
.tray-wifi { margin-right: 7.500px; }
.tray-vol { margin-right: 8.500px; }
.lang { width: 24px; display: flex; flex-direction: column; align-items: center; line-height: 17px; }
.clock { width: 70px; margin-left: 7px; display: flex; flex-direction: column; align-items: center; line-height: 17px; }
.notify { width: 40px; height: 40px; margin-left: 2px; margin-right: 11px; position: relative; display: flex; align-items: center; justify-content: center; }
.notify-ic { margin: -8px 4px 0 0; }

/* ── ACTIVATE WINDOWS OVERLAY ──────────────────────────── */
.watermark { position: absolute; left: 1073px; top: 650px; color: rgba(120,120,120,0.45); pointer-events: none; }
.wm-big { font-size: 19px; line-height: 24px; }
.wm-small { font-size: 14.500px; line-height: 18px; margin-top: 3px; white-space: nowrap; }
```
